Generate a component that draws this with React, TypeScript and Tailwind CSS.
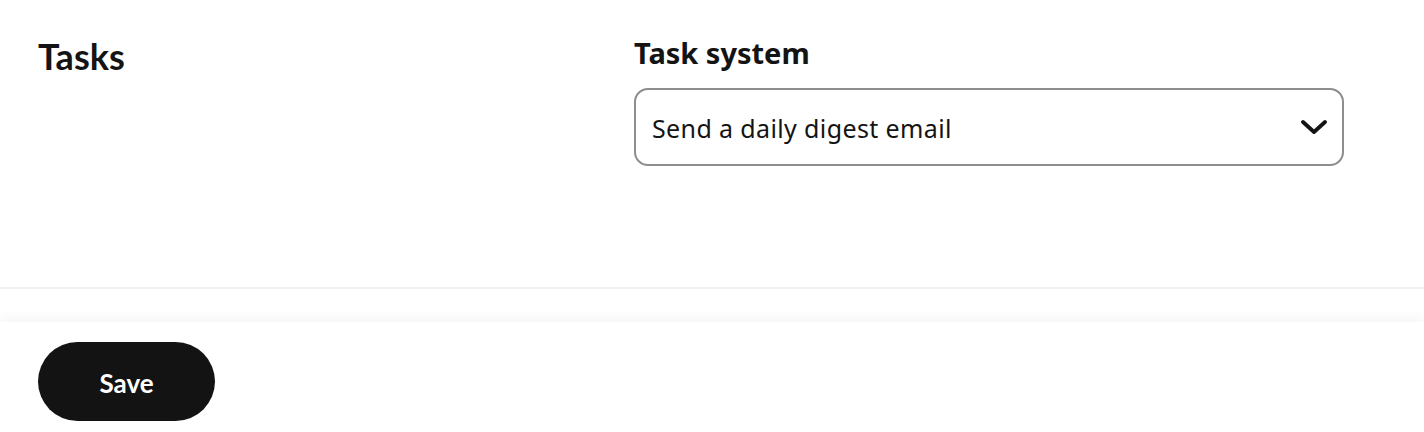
import React from 'react';

const Chevron: React.FC = () => (
    <svg width="26" height="16" viewBox="0 0 26 16" fill="none" className="shrink-0">
        <polyline points="2,3 13,13 24,3" stroke="#141414" strokeWidth="3.8" strokeLinecap="round" strokeLinejoin="round" />
    </svg>
);

const App: React.FC = () => {
    return (
        <div className="min-h-screen bg-white text-[#141414] font-['Lato','Noto_Sans',sans-serif]">
            <section className="flex items-start px-[38px] pt-[35px] pb-[121px] border-b-2 border-[#f1f1f1]">
                <h2 className="w-[596px] shrink-0 text-[36px] leading-[1.2] font-bold">Tasks</h2>
                <div className="w-[710px]">
                    <label className="block font-['Noto_Sans',sans-serif] text-[29px] leading-[36px] font-bold">Task system</label>
                    <div className="mt-[17px] h-[78px] flex items-center justify-between pl-[16px] pr-[15px] border-2 border-[#8d8d8d] rounded-[14px]">
                        <span className="font-['Noto_Sans',sans-serif] text-[25px] tracking-[0.015em] leading-[1.2] pt-[2px]">Send a daily digest email</span>
                        <Chevron />
                    </div>
                </div>
            </section>
            <div className="h-[33px]" />
            <footer className="px-[38px] pt-[20px] pb-[11px] shadow-[0_-6px_10px_rgba(0,0,0,0.035)]">
                <button className="w-[177px] h-[79px] rounded-full bg-[#131313] text-white text-[26px] font-bold pt-[3px]">
                    Save
                </button>
            </footer>
        </div>
    );
};

export default App;
